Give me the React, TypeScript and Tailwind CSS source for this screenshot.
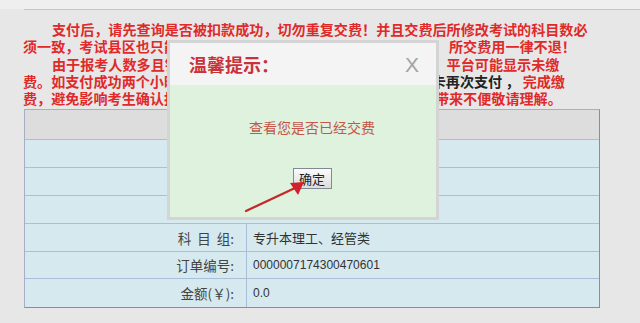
const cjk = '"Noto Sans CJK SC", "Microsoft YaHei", sans-serif';

type Row = { label?: string; value?: string; mono?: boolean; gray?: boolean; h: string };

const rows: Row[] = [
  { gray: true, h: "h-[30px]" },
  { h: "h-[28px]" },
  { h: "h-[28px]" },
  { h: "h-[28px]" },
  { label: "科\u00a0\u00a0目\u00a0\u00a0组:", value: "专升本理工、经管类", h: "h-[28px]" },
  { label: "订单编号:", value: "0000007174300470601", mono: true, h: "h-[27px]" },
  { label: "金额(￥):", value: "0.0", mono: true, h: "h-[28px]" },
];

export default function App() {
  return (
    <div
      className="relative w-[640px] h-[323px] overflow-hidden bg-[#e7e7e7]"
      style={{ fontFamily: cjk }}
    >
      {/* top strip */}
      <div className="h-[9px] bg-[#efefef]" />
      <div className="ml-[24px] border-t border-[#c6c6c6]" />

      {/* notice */}
      <div className="pl-[23px] pt-[11px] text-[14.1px] font-bold leading-[17.3px] text-[#e02a2a] whitespace-nowrap">
        <div className="pl-[29px]">
          支付后，请先查询是否被扣款成功，切勿重复交费！并且交费后所修改考试的科目数必
        </div>
        <div>须一致，考试县区也只能选择一个，如因考生自身原因造成的错误， 所交费用一律不退！</div>
        <div className="pl-[29px]">
          由于报考人数多且银行数据返回存在一定延迟，支付成功之后，平台可能显示未缴
        </div>
        <div>
          费。如支付成功两个小时后仍显示未缴费，请不要再使用其他银
          <span className="text-[#222]">行卡再次支付 ，</span> 完成缴
        </div>
        <div>费，避免影响考生确认报名信息，请耐心等待系统更新查询结果。 带来不便敬请理解。</div>
      </div>

      {/* table */}
      <div className="mt-[2px] ml-[24px] w-[576px] border border-[#a6b0c2] border-r-[#8a8c9e] border-b-[#8a8c9e]">
        {rows.map((r, i) => (
          <div
            key={i}
            className={`flex ${r.h} ${i < rows.length - 1 ? "border-b border-[#a9bed8]" : ""} ${
              r.gray ? "bg-[#dddddd]" : "bg-[#d5e9ef]"
            }`}
          >
            {r.label && (
              <>
                <div className="w-[222px] border-r border-[#a9bed8] flex items-center justify-end pr-[12px] text-[13.5px] text-[#444]">
                  {r.label}
                </div>
                <div
                  className={`flex items-center pl-[6px] text-[#333] ${r.mono ? "text-[12px]" : "text-[13px]"}`}
                  style={r.mono ? { fontFamily: '"Liberation Sans", Arial, sans-serif' } : undefined}
                >
                  {r.value}
                </div>
              </>
            )}
          </div>
        ))}
      </div>

      {/* dialog */}
      <div className="absolute left-[167px] top-[40px] w-[272px] h-[180px] border-[3px] border-[#d4d4d4] flex flex-col">
        <div className="h-[42px] bg-[#f4f4f4] flex items-center justify-between pl-[19px] pr-[17px]">
          <span className="text-[18px] font-bold text-[#c8323a]">温馨提示：</span>
          <span
            className="text-[21px] text-[#a3a3a3] leading-none"
            style={{ fontFamily: '"Liberation Sans", Arial, sans-serif' }}
          >
            X
          </span>
        </div>
        <div className="flex-1 bg-[#dff2dd] flex flex-col items-center pl-[18px] pt-[33px]">
          <div className="text-[14px] leading-[18px] text-[#c4564a]">查看您是否已经交费</div>
          <button className="mt-[32px] w-[39px] h-[21px] border border-[#7f8a96] bg-gradient-to-b from-[#fbfbfb] to-[#dcdcdc] text-[13px] leading-none text-[#222] flex items-center justify-center">
            确定
          </button>
        </div>
      </div>

      {/* red arrow */}
      <svg className="absolute left-0 top-0 pointer-events-none" width="640" height="323">
        <line x1="246" y1="211" x2="295" y2="188" stroke="#c42a2a" strokeWidth="2.2" strokeLinecap="round" />
        <polygon points="304,182 290,183 298,195" fill="#d0222a" />
      </svg>
    </div>
  );
}
